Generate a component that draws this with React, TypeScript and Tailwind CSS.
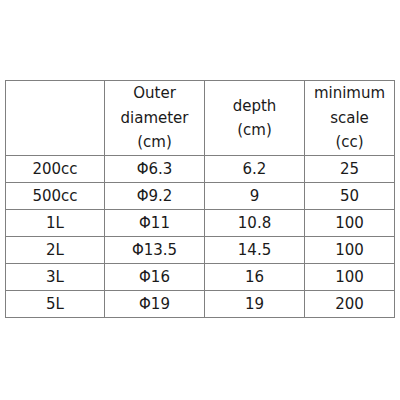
const rows = [
  ["200cc", "Φ6.3", "6.2", "25"],
  ["500cc", "Φ9.2", "9", "50"],
  ["1L", "Φ11", "10.8", "100"],
  ["2L", "Φ13.5", "14.5", "100"],
  ["3L", "Φ16", "16", "100"],
  ["5L", "Φ19", "19", "200"],
];

export default function App() {
  return (
    <div className="w-[400px] h-[400px] bg-white pt-[80px] pl-[5px] font-['DejaVu_Sans',sans-serif] text-[15px] text-[#1a1a1a]">
      <table className="border-collapse border border-[#808080] w-[389px] table-fixed">
        <colgroup>
          <col className="w-[99px]" />
          <col className="w-[100px]" />
          <col className="w-[100px]" />
          <col className="w-[90px]" />
        </colgroup>
        <thead>
          <tr className="h-[75px]">
            <th className="border border-[#808080] font-normal"></th>
            <th className="border border-[#808080] font-normal leading-[24.5px]">
              Outer
              <br />
              diameter
              <br />
              (cm)
            </th>
            <th className="border border-[#808080] font-normal leading-[24.5px]">
              depth
              <br />
              (cm)
            </th>
            <th className="border border-[#808080] font-normal leading-[24.5px]">
              minimum
              <br />
              scale
              <br />
              (cc)
            </th>
          </tr>
        </thead>
        <tbody>
          {rows.map((r) => (
            <tr key={r[0]} className="h-[27px]">
              {r.map((c, i) => (
                <td key={i} className="border border-[#808080] text-center leading-[20px] p-0">
                  {c}
                </td>
              ))}
            </tr>
          ))}
        </tbody>
      </table>
    </div>
  );
}
